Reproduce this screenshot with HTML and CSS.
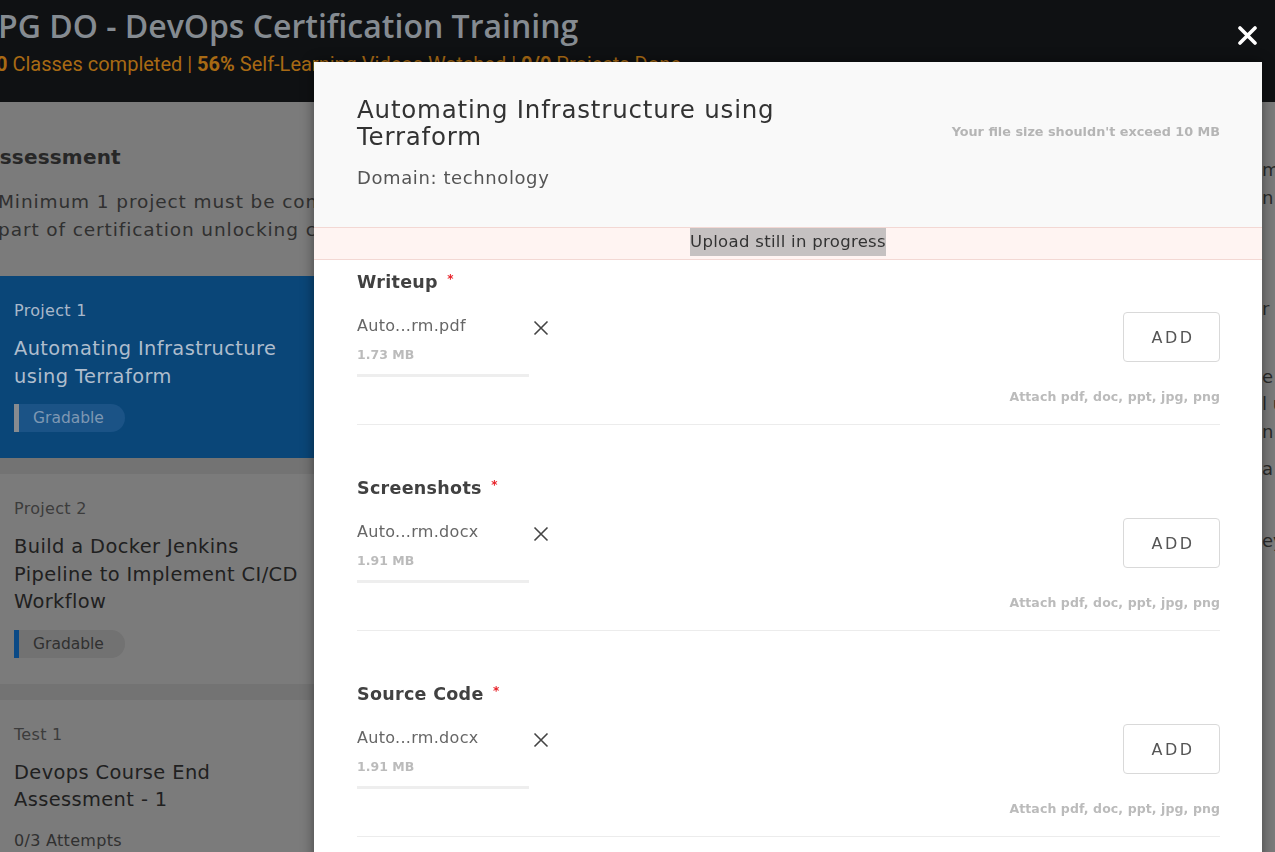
FILE: index.html
```html
<!DOCTYPE html>
<html lang="en">
<head>
<meta charset="utf-8">
<title>PG DO - DevOps Certification Training</title>
<link rel="stylesheet" href="styles.css">
</head>
<body>
<div class="page">
  <header class="top">
    <h1 class="course-title">PG DO - DevOps Certification Training</h1>
    <p class="course-stats"><b>0</b> Classes completed | <b>56%</b> Self-Learning Videos Watched | <b>0/0</b> Projects Done</p>
  </header>
  <div class="content">
    <aside class="sidebar">
      <div class="intro">
        <h2 class="intro-title">Assessment</h2>
        <p class="intro-text">Minimum 1 project must be completed as<br>part of certification unlocking criteria</p>
      </div>
      <div class="cards">
        <div class="card card-active">
          <div class="card-kind">Project 1</div>
          <div class="card-title">Automating Infrastructure using Terraform</div>
          <span class="pill">Gradable</span>
        </div>
        <div class="card">
          <div class="card-kind">Project 2</div>
          <div class="card-title">Build a Docker Jenkins Pipeline to Implement CI/CD Workflow</div>
          <span class="pill">Gradable</span>
        </div>
        <div class="card">
          <div class="card-kind">Test 1</div>
          <div class="card-title">Devops Course End Assessment - 1</div>
          <div class="card-meta">0/3 Attempts</div>
        </div>
      </div>
    </aside>
    <main class="main">
      <div class="sliver">
        <div class="s1">m</div>
        <div>n</div>
        <div class="s2">r</div>
        <div class="s3">e</div>
        <div>l u</div>
        <div>n</div>
        <div class="s4">a</div>
        <div class="s5">ey</div>
      </div>
    </main>
  </div>
</div>

<button class="close" aria-label="Close">
  <svg width="19" height="19" viewBox="0 0 19 19"><path d="M2 2 L17 17 M17 2 L2 17" stroke="#ffffff" stroke-width="3.6" stroke-linecap="round" fill="none"/></svg>
</button>

<div class="modal">
  <div class="modal-head">
    <div class="head-left">
      <h2 class="modal-title">Automating Infrastructure using Terraform</h2>
      <div class="domain">Domain: technology</div>
    </div>
    <div class="size-note">Your file size shouldn't exceed 10 MB</div>
  </div>
  <div class="banner"><span class="banner-text">Upload still in progress</span></div>
  <div class="modal-body">
    <section class="upload">
      <h3 class="upload-label">Writeup <span class="req">*</span></h3>
      <div class="upload-row">
        <div class="file">
          <div class="file-info">
            <div class="file-name">Auto...rm.pdf</div>
            <div class="file-size">1.73 MB</div>
            <div class="file-bar"></div>
          </div>
          <svg class="remove" width="16" height="16" viewBox="0 0 16 16"><path d="M1.5 1.5 L14.5 14.5 M14.5 1.5 L1.5 14.5" stroke="#444" stroke-width="1.6" fill="none"/></svg>
        </div>
        <div class="actions">
          <button class="add">ADD</button>
          <div class="hint">Attach pdf, doc, ppt, jpg, png</div>
        </div>
      </div>
    </section>
    <section class="upload">
      <h3 class="upload-label">Screenshots <span class="req">*</span></h3>
      <div class="upload-row">
        <div class="file">
          <div class="file-info">
            <div class="file-name">Auto...rm.docx</div>
            <div class="file-size">1.91 MB</div>
            <div class="file-bar"></div>
          </div>
          <svg class="remove" width="16" height="16" viewBox="0 0 16 16"><path d="M1.5 1.5 L14.5 14.5 M14.5 1.5 L1.5 14.5" stroke="#444" stroke-width="1.6" fill="none"/></svg>
        </div>
        <div class="actions">
          <button class="add">ADD</button>
          <div class="hint">Attach pdf, doc, ppt, jpg, png</div>
        </div>
      </div>
    </section>
    <section class="upload">
      <h3 class="upload-label">Source Code <span class="req">*</span></h3>
      <div class="upload-row">
        <div class="file">
          <div class="file-info">
            <div class="file-name">Auto...rm.docx</div>
            <div class="file-size">1.91 MB</div>
            <div class="file-bar"></div>
          </div>
          <svg class="remove" width="16" height="16" viewBox="0 0 16 16"><path d="M1.5 1.5 L14.5 14.5 M14.5 1.5 L1.5 14.5" stroke="#444" stroke-width="1.6" fill="none"/></svg>
        </div>
        <div class="actions">
          <button class="add">ADD</button>
          <div class="hint">Attach pdf, doc, ppt, jpg, png</div>
        </div>
      </div>
    </section>
  </div>
</div>
</body>
</html>
```

FILE: styles.css
```css
* { box-sizing: border-box; }

html, body {
  margin: 0;
  padding: 0;
  height: 852px;
  overflow: hidden;
}

body {
  background: #7b7b7b;
  font-family: "DejaVu Sans", "Noto Sans", sans-serif;
}

.page {
  width: 1275px;
}

/* ---------- dimmed page header ---------- */
.top {
  height: 102px;
  background: #0f1113;
  padding-top: 7px;
}

.course-title {
  margin: 0 0 0 -2px;
  font-family: "Open Sans", "Liberation Sans", sans-serif;
  font-weight: 600;
  font-size: 32px;
  line-height: 38px;
  color: #858b91;
  white-space: nowrap;
}

.course-stats {
  margin: 7px 0 0 -4px;
  font-family: Roboto, "Liberation Sans", sans-serif;
  font-size: 20px;
  line-height: 24px;
  color: #a86a14;
  white-space: nowrap;
}
.course-stats b { font-weight: 700; }

/* ---------- background content ---------- */
.content {
  display: flex;
}

.sidebar {
  width: 330px;
  flex: none;
}

.intro {
  padding: 42px 0 32px 0;
}

.intro-title {
  margin: 0 0 0 -16px;
  font-size: 20px;
  line-height: 26px;
  font-weight: 700;
  color: #272727;
  letter-spacing: 0.2px;
}

.intro-text {
  margin: 18px 0 0 -2px;
  font-size: 18.5px;
  line-height: 28px;
  color: #303030;
  white-space: nowrap;
  letter-spacing: 0.9px;
}

.cards {
  background: #737373;
  display: flex;
  flex-direction: column;
  gap: 16px;
}

.card {
  background: #7b7b7b;
  padding: 24px 14px 26px;
}

.card-active {
  background: #0a4678;
}

.card-kind {
  font-size: 16px;
  line-height: 22px;
  color: #3c3c3c;
  letter-spacing: 0.3px;
}

.card-title {
  margin-top: 13px;
  width: 304px;
  font-size: 19.4px;
  line-height: 27.5px;
  color: #202020;
  letter-spacing: 0.4px;
}

.card-meta {
  margin-top: 16px;
  font-size: 16px;
  line-height: 22px;
  color: #303030;
  letter-spacing: 0.3px;
}

.card-active .card-kind { color: #a9b8ca; }
.card-active .card-title { color: #afbdcd; }

.pill {
  display: inline-block;
  margin-top: 14px;
  height: 28px;
  line-height: 28px;
  padding: 0 21px 0 14px;
  font-size: 15.5px;
  color: #303030;
  background: #727272;
  border-left: 5px solid #0b4a86;
  border-radius: 0 14px 14px 0;
}

.card-active .pill {
  color: #7e98b3;
  background: #1b5386;
  border-left-color: #878b90;
}

.main {
  flex: 1;
  display: flex;
  justify-content: flex-end;
}

.sliver {
  width: 13px;
  overflow: hidden;
  white-space: nowrap;
  font-size: 18px;
  line-height: 27.5px;
  color: #2a2a2a;
}
.s1 { margin-top: 54px; }
.s2 { margin-top: 84px; }
.s3 { margin-top: 40px; }
.s4 { margin-top: 10px; }
.s5 { margin-top: 44px; }

/* ---------- overlay pieces ---------- */
.close {
  position: fixed;
  top: 26px;
  left: 1238px;
  width: 19px;
  height: 19px;
  padding: 0;
  border: 0;
  background: none;
  line-height: 0;
}

.modal {
  position: fixed;
  top: 62px;
  left: 314px;
  width: 948px;
  height: 820px;
  background: #ffffff;
  box-shadow: 0 0 12px rgba(0, 0, 0, 0.45);
  overflow: hidden;
}

.modal-head {
  height: 165px;
  background: #f9f9f9;
  padding: 34px 42px 0 43px;
  display: flex;
  justify-content: space-between;
  align-items: flex-start;
}

.modal-title {
  margin: 0;
  width: 460px;
  font-weight: 400;
  font-size: 24.5px;
  line-height: 27px;
  color: #333333;
  letter-spacing: 0.8px;
}

.domain {
  margin-top: 16px;
  font-size: 18px;
  line-height: 24px;
  color: #555555;
  letter-spacing: 0.6px;
}

.size-note {
  margin-top: 28px;
  font-size: 12.8px;
  line-height: 16px;
  color: #b5b5b5;
  font-weight: 700;
}

.banner {
  height: 33px;
  background: #fff4f2;
  border-top: 1px solid #f3d8d4;
  border-bottom: 1px solid #f3d8d4;
  text-align: center;
}

.banner-text {
  display: inline-block;
  vertical-align: top;
  line-height: 28px;
  font-size: 16.5px;
  color: #333333;
  background: #c5c1c1;
  letter-spacing: 0.3px;
}

.modal-body {
  padding: 0 42px 0 43px;
}

.upload {
  padding-top: 48px;
  padding-bottom: 18px;
  border-bottom: 1px solid #ececec;
}
.upload:first-child { padding-top: 7px; }

.upload-label {
  margin: 0;
  font-size: 17.5px;
  line-height: 24px;
  font-weight: 700;
  color: #414141;
  letter-spacing: 0.3px;
}

.req {
  color: #e8232a;
  font-size: 12px;
  vertical-align: 5px;
  margin-left: 3px;
}

.upload-row {
  margin-top: 18px;
  display: flex;
  justify-content: space-between;
  align-items: flex-start;
}

.file {
  display: flex;
  align-items: flex-start;
  padding-top: 3px;
}

.file-info {
  width: 172px;
}

.file-name {
  font-size: 16px;
  line-height: 22px;
  color: #666666;
  letter-spacing: 0.3px;
}

.file-size {
  margin-top: 9px;
  font-size: 12.5px;
  line-height: 18px;
  color: #bbbbbb;
  font-weight: 700;
}

.file-bar {
  margin-top: 10px;
  height: 3px;
  background: #eeeeee;
}

.remove {
  margin-left: 4px;
  margin-top: 5px;
  flex: none;
}

.actions {
  display: flex;
  flex-direction: column;
  align-items: flex-end;
}

.add {
  width: 97px;
  height: 50px;
  background: #ffffff;
  border: 1px solid #d9d9d9;
  border-radius: 4px;
  font-family: "DejaVu Sans", sans-serif;
  font-size: 16px;
  letter-spacing: 2.4px;
  color: #555555;
  padding: 0 0 0 3px;
}

.hint {
  margin-top: 26px;
  font-size: 12.5px;
  line-height: 18px;
  color: #bbbbbb;
  font-weight: 700;
  letter-spacing: 0.1px;
}
```
